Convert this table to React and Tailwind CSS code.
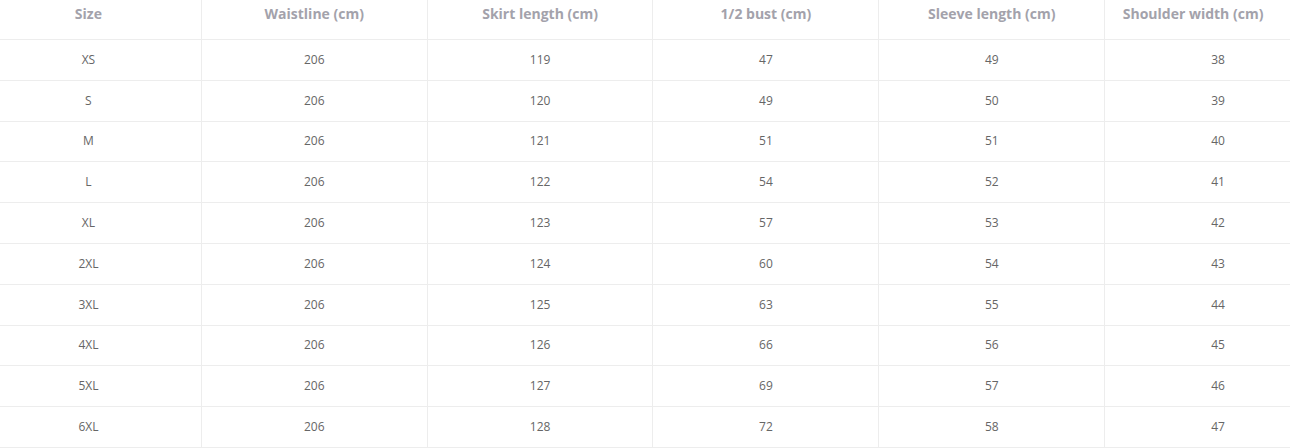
import React from "react";

const headers = [
    "Size",
    "Waistline (cm)",
    "Skirt length (cm)",
    "1/2 bust (cm)",
    "Sleeve length (cm)",
    "Shoulder width (cm)",
];

const rows = [
    ["XS", 206, 119, 47, 49, 38],
    ["S", 206, 120, 49, 50, 39],
    ["M", 206, 121, 51, 51, 40],
    ["L", 206, 122, 54, 52, 41],
    ["XL", 206, 123, 57, 53, 42],
    ["2XL", 206, 124, 60, 54, 43],
    ["3XL", 206, 125, 63, 55, 44],
    ["4XL", 206, 126, 66, 56, 45],
    ["5XL", 206, 127, 69, 57, 46],
    ["6XL", 206, 128, 72, 58, 47],
];

const App = () => {
    return (
        <div className="w-[1290px] h-[448px] overflow-hidden bg-white" style={{ fontFamily: '"Open Sans", "Noto Sans", sans-serif' }}>
            <div className="-ml-[24px] w-[1355px]">
                {/* header */}
                <div className="grid grid-cols-6 h-[40px] border-b border-[#ededed]">
                    {headers.map((h, i) => (
                        <div
                            key={h}
                            className={
                                "flex justify-center pt-[3px] text-[14px] font-bold text-[#a3a2ab] border-[#ededed] " +
                                (i < 5 ? "border-r " : "") +
                                (i === 5 ? "pr-[50px]" : "")
                            }
                        >
                            {h}
                        </div>
                    ))}
                </div>

                {/* body */}
                {rows.map((row) => (
                    <div key={row[0]} className="grid grid-cols-6 h-[40.8px] border-b border-[#ededed]">
                        {row.map((cell, i) => (
                            <div
                                key={i}
                                className={
                                    "flex items-center justify-center text-[12px] text-[#666666] border-[#ededed] " +
                                    (i < 5 ? "border-r" : "")
                                }
                            >
                                {cell}
                            </div>
                        ))}
                    </div>
                ))}
            </div>
        </div>
    );
};

export default App;
